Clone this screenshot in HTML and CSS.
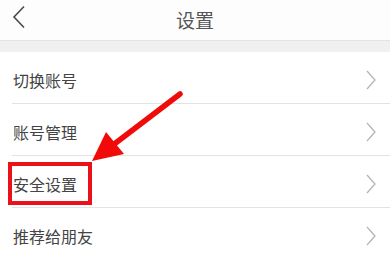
FILE: index.html
```html
<!DOCTYPE html>
<html lang="zh">
<head>
<meta charset="utf-8">
<link rel="stylesheet" href="styles.css">
</head>
<body>
<div class="page">
  <header class="topbar">
    <svg class="back" width="14" height="24" viewBox="0 0 14 24"><path d="M12 1.5 L2 12 L12 22.5" fill="none" stroke="#4a4a4a" stroke-width="1.6"/></svg>
    <div class="title">设置</div>
  </header>
  <div class="band"></div>
  <ul class="list">
    <li class="row"><span class="label">切换账号</span><svg class="chev" width="10" height="20" viewBox="0 0 10 20"><path d="M1 1 L9 10 L1 19" fill="none" stroke="#b5b5b5" stroke-width="1.3"/></svg></li>
    <li class="row"><span class="label">账号管理</span><svg class="chev" width="10" height="20" viewBox="0 0 10 20"><path d="M1 1 L9 10 L1 19" fill="none" stroke="#b5b5b5" stroke-width="1.3"/></svg></li>
    <li class="row"><span class="label">安全设置</span><svg class="chev" width="10" height="20" viewBox="0 0 10 20"><path d="M1 1 L9 10 L1 19" fill="none" stroke="#b5b5b5" stroke-width="1.3"/></svg></li>
    <li class="row"><span class="label">推荐给朋友</span><svg class="chev" width="10" height="20" viewBox="0 0 10 20"><path d="M1 1 L9 10 L1 19" fill="none" stroke="#b5b5b5" stroke-width="1.3"/></svg></li>
  </ul>
  <div class="highlight"></div>
  <svg class="arrow" width="390" height="260" viewBox="0 0 390 260">
    <line x1="180" y1="94" x2="113" y2="145" stroke="#f00a0a" stroke-width="5.5" stroke-linecap="round"/>
    <polygon points="92,161 106,132 124,154" fill="#f00a0a"/>
  </svg>
</div>
</body>
</html>
```
FILE: styles.css
```css
* { box-sizing: border-box; }
html, body { margin: 0; padding: 0; background: #fff; }
body { font-family: "Noto Sans CJK SC", "Noto Sans", sans-serif; }
.page { position: relative; width: 390px; height: 260px; overflow: hidden; background: #fff; }
.topbar { height: 40px; display: flex; align-items: center; justify-content: center; position: relative; background: #fdfdfd; }
.back { position: absolute; left: 12px; top: 5px; }
.title { font-size: 19px; color: #555; line-height: 1; margin-top: -2px; }
.band { height: 12px; background: #f0f0f0; border-top: 1px solid #e4e4e4; }
.list { list-style: none; margin: 0; padding: 0; }
.row { height: 52px; margin-left: 12px; padding: 0 14px 0 1px; display: flex; align-items: center; justify-content: space-between; border-bottom: 1px solid #e3e3e3; }
.row:last-child { border-bottom: none; }
.label { font-size: 16px; color: #444; margin-top: 4px; }
.chev { display: block; margin-top: 4px; }
.highlight { position: absolute; left: 8px; top: 162px; width: 84px; height: 43px; border: 4px solid #ea1118; }
.arrow { position: absolute; left: 0; top: 0; }
```
